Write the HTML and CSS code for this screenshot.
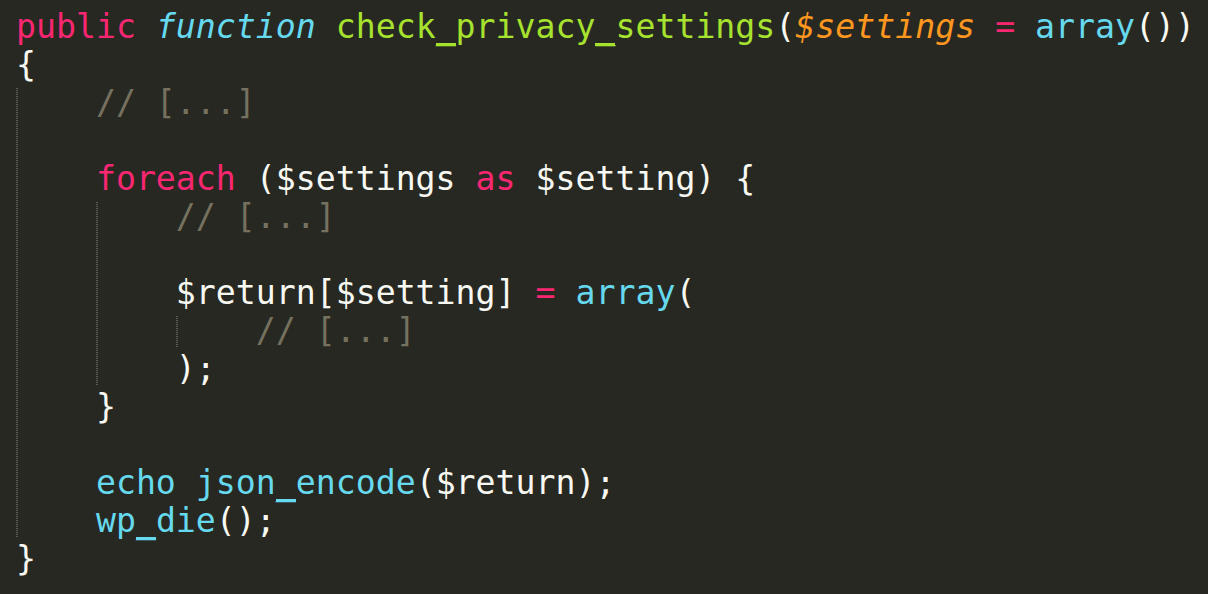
FILE: index.html
```html
<!DOCTYPE html>
<html lang="en">
<head>
<meta charset="utf-8">
<title>check_privacy_settings</title>
<link rel="stylesheet" href="styles.css">
</head>
<body>
<div class="code"><div class="line"><span class="kw">public</span> <span class="st">function</span> <span class="fn">check<span class="us">_</span>privacy<span class="us">_</span>settings</span>(<span class="pa">$settings</span> <span class="kw">=</span> <span class="bi">array</span>())</div><div class="line">{</div><div class="block"><div class="line"><span class="cm">// [...]</span></div><div class="line"> </div><div class="line"><span class="kw">foreach</span> ($settings <span class="kw">as</span> $setting) {</div><div class="block"><div class="line"><span class="cm">// [...]</span></div><div class="line"> </div><div class="line">$return[$setting] <span class="kw">=</span> <span class="bi">array</span>(</div><div class="block"><div class="line"><span class="cm">// [...]</span></div></div><div class="line">);</div></div><div class="line">}</div><div class="line"> </div><div class="line"><span class="bi">echo</span> <span class="bi">json<span class="us">_</span>encode</span>($return);</div><div class="line"><span class="bi">wp<span class="us">_</span>die</span>();</div></div><div class="line">}</div></div>
</body>
</html>
```

FILE: styles.css
```css
html, body {
  margin: 0;
  padding: 0;
  background: #272822;
}

.code {
  padding: 8px 0 0 16px;
  height: 594px;
  box-sizing: border-box;
  font-family: "DejaVu Sans Mono", monospace;
  font-size: 33.2px;
  line-height: 38px;
  color: #f8f8f2;
  background: #272822;
  white-space: pre;
}

.line {
  height: 38px;
}

.block {
  position: relative;
  padding-left: 4ch;
}

.block::before {
  content: "";
  position: absolute;
  left: 0;
  top: 4px;
  bottom: 2px;
  width: 2px;
  background-image: linear-gradient(#5d5d55 50%, transparent 50%);
  background-size: 2px 2px;
}

/* Menlo-style heavier underscore */
.us {
  background-image: linear-gradient(currentColor, currentColor);
  background-repeat: no-repeat;
  background-size: 100% 3px;
  background-position: 0 36px;
}

.kw { color: #f92672; }
.st { color: #66d9ef; font-style: italic; }
.fn { color: #a6e22e; }
.pa { color: #fd971f; font-style: italic; }
.bi { color: #66d9ef; }
.cm { color: #75715e; }
```
